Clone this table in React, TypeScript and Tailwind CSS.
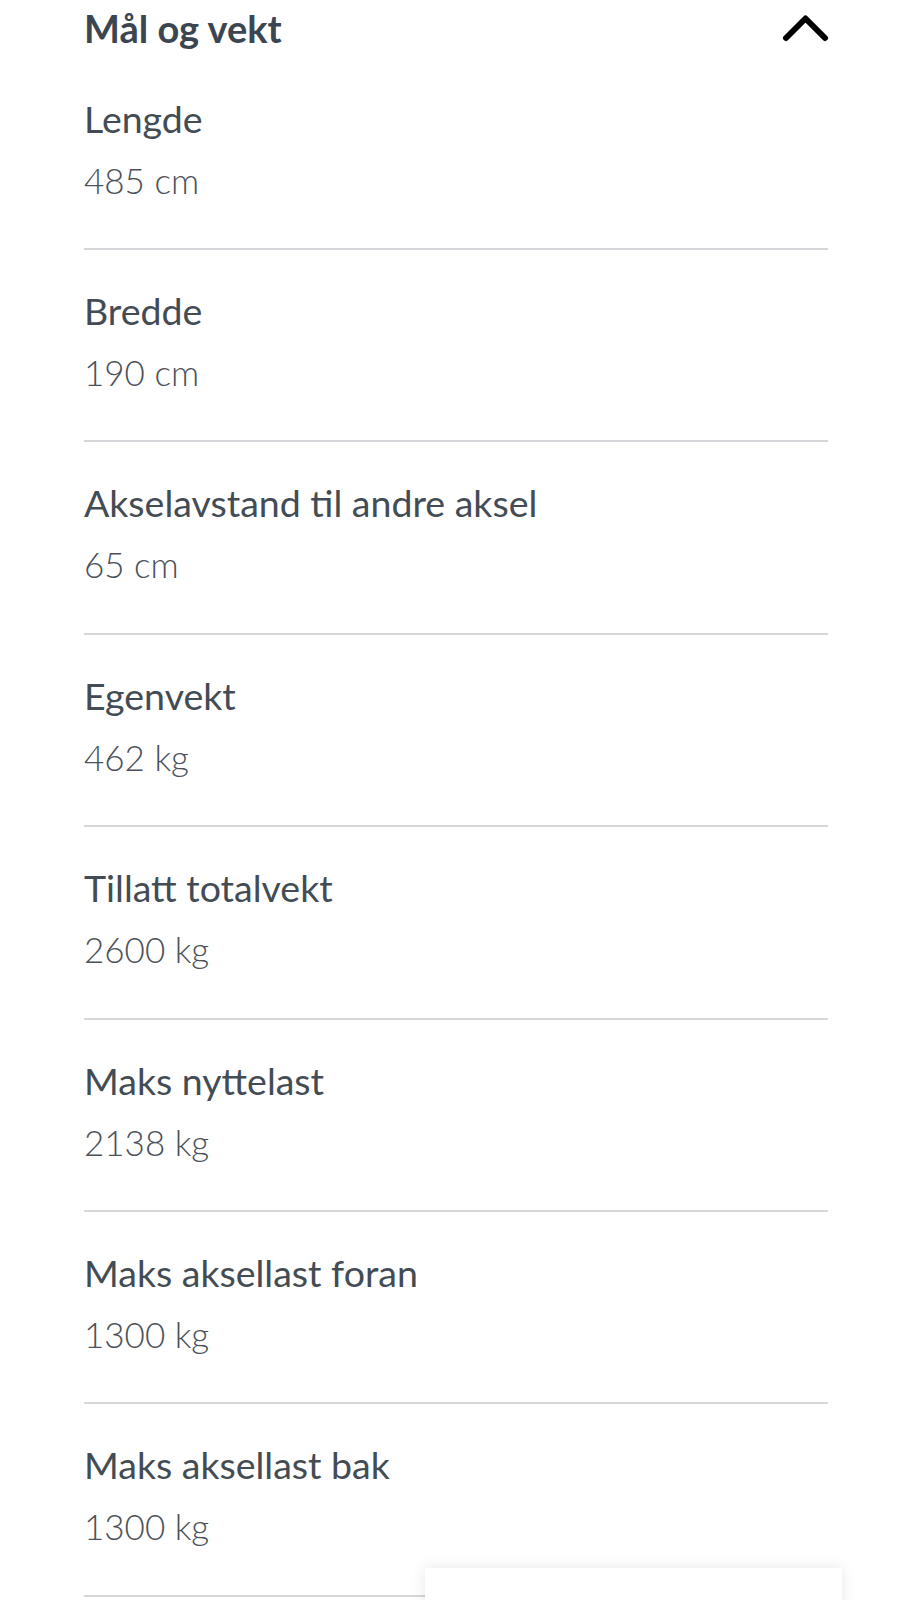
const SPECS = [
  { label: "Lengde", value: "485 cm" },
  { label: "Bredde", value: "190 cm" },
  { label: "Akselavstand til andre aksel", value: "65 cm" },
  { label: "Egenvekt", value: "462 kg" },
  { label: "Tillatt totalvekt", value: "2600 kg" },
  { label: "Maks nyttelast", value: "2138 kg" },
  { label: "Maks aksellast foran", value: "1300 kg" },
  { label: "Maks aksellast bak", value: "1300 kg" },
];

function ChevronUp() {
  return (
    <svg width="48" height="30" viewBox="0 0 48 30" fill="none" className="shrink-0">
      <path d="M4 24 L23.5 4.5 L43 24" stroke="#000" strokeWidth="6" strokeLinecap="round" strokeLinejoin="round" />
    </svg>
  );
}

function SpecRow({ label, value, first }: { label: string; value: string; first: boolean }) {
  return (
    <div className={first ? "h-[192px] pt-[39px]" : "h-[192.4px] border-t-2 border-[#d4d6d9] pt-[37px]"}>
      <div className="text-[37.5px] leading-[48px] text-[#434c55]">{label}</div>
      <div className="mt-[13px] text-[35px] leading-[48px] font-light text-[#4a5159]">{value}</div>
    </div>
  );
}

export default function App() {
  return (
    <div
      className="relative min-h-[1600px] overflow-hidden bg-white"
      style={{ fontFamily: "Lato, 'Open Sans', sans-serif" }}
    >
      <div className="px-[84px]">
        <div className="flex h-[56px] items-start justify-between pt-[4px]">
          <h2 className="text-[38px] leading-[48px] font-bold text-[#3b4650]">Mål og vekt</h2>
          <div className="-mr-[2px] pt-[9.5px]">
            <ChevronUp />
          </div>
        </div>
        {SPECS.map((s, i) => (
          <SpecRow key={s.label} label={s.label} value={s.value} first={i === 0} />
        ))}
        <div className="border-t-2 border-[#d4d6d9]" />
      </div>
      <div className="absolute left-[425px] top-[1568px] h-[80px] w-[417px] bg-white shadow-[0_0_14px_rgba(0,0,0,0.1)]" />
    </div>
  );
}
